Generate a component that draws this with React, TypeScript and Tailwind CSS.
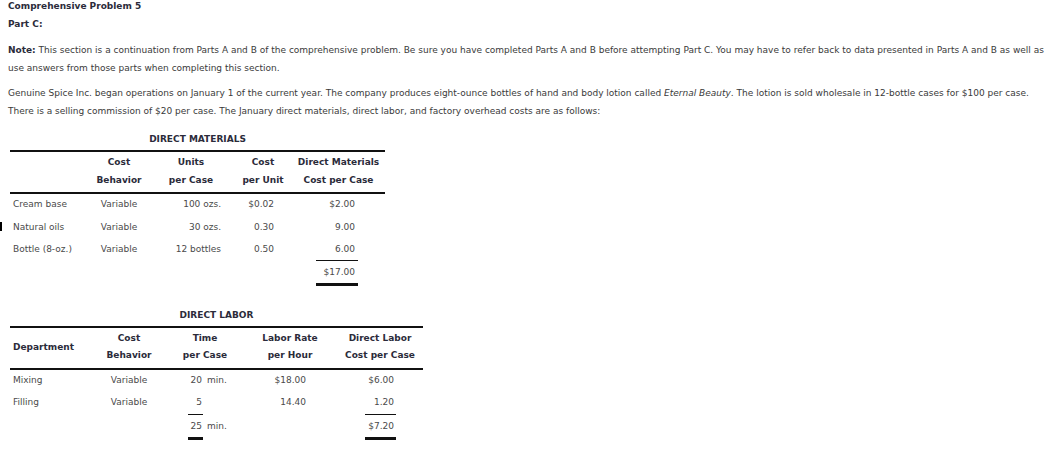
import React from 'react';

const font = { fontFamily: '"DejaVu Sans", Verdana, sans-serif' };

const materials = [
  { name: 'Cream base', units: '100 ozs.', unit: '$0.02', cost: '$2.00' },
  { name: 'Natural oils', units: '30 ozs.', unit: '0.30', cost: '9.00' },
  { name: 'Bottle (8-oz.)', units: '12 bottles', unit: '0.50', cost: '6.00' },
];

const labor = [
  { dept: 'Mixing', time: '20', min: 'min.', rate: '$18.00', cost: '$6.00' },
  { dept: 'Filling', time: '5', min: '', rate: '14.40', cost: '1.20' },
];

const App = () => {
  return (
    <div className="relative w-[1056px] h-[456px] overflow-hidden bg-white text-[9px] text-[#3a3a3a]" style={font}>
      {/* little mark at the left edge */}
      <div className="absolute left-0 top-[222px] w-[2px] h-[9px] bg-black" />

      <div className="pl-[8px]">
        <h1 className="font-bold leading-[12px] text-[#2b2b3a]">Comprehensive Problem 5</h1>
        <h2 className="mt-[6px] font-bold leading-[12px] text-[#2b2b3a]">Part C:</h2>

        <p className="mt-[11px] leading-[18px]">
          <span className="block whitespace-nowrap">
            <b className="text-[#2b2b3a]">Note:</b> This section is a continuation from Parts A and B of the comprehensive problem. Be sure you have completed Parts A and B before attempting Part C. You may have to refer back to data presented in Parts A and B as well as
          </span>
          <span className="block whitespace-nowrap">use answers from those parts when completing this section.</span>
        </p>

        <p className="mt-[7px] leading-[18px]">
          <span className="block whitespace-nowrap">
            Genuine Spice Inc. began operations on January 1 of the current year. The company produces eight-ounce bottles of hand and body lotion called <i>Eternal Beauty</i>. The lotion is sold wholesale in 12-bottle cases for $100 per case.
          </span>
          <span className="block whitespace-nowrap">There is a selling commission of $20 per case. The January direct materials, direct labor, and factory overhead costs are as follows:</span>
        </p>
      </div>

      {/* DIRECT MATERIALS */}
      <div className="ml-[10px] w-[375px] mt-[10px]">
        <div className="text-center font-bold leading-[18px] text-[#2b2b3a]">DIRECT MATERIALS</div>
        <table className="mt-[2px] w-[375px] table-fixed border-collapse">
          <colgroup>
            <col className="w-[80px]" />
            <col className="w-[58px]" />
            <col className="w-[86px]" />
            <col className="w-[58px]" />
            <col className="w-[93px]" />
          </colgroup>
          <thead>
            <tr className="border-t-2 border-b-2 border-[#111]">
              <th />
              <th className="pt-[1px] pb-[3px] font-bold leading-[18px] text-center text-[#2b2b3a]">Cost<br />Behavior</th>
              <th className="pt-[1px] pb-[3px] font-bold leading-[18px] text-center text-[#2b2b3a]">Units<br />per Case</th>
              <th className="pt-[1px] pb-[3px] font-bold leading-[18px] text-center text-[#2b2b3a]">Cost<br />per Unit</th>
              <th className="pt-[1px] pb-[3px] font-bold leading-[18px] text-center text-[#2b2b3a] whitespace-nowrap">Direct Materials<br />Cost per Case</th>
            </tr>
          </thead>
          <tbody className="text-[#4a4a4a]">
            {materials.map((m, i) => (
              <tr key={m.name} className={i === 2 ? 'h-[21px]' : 'h-[23px]'}>
                <td className="pl-[3px] whitespace-nowrap">{m.name}</td>
                <td className="text-center">Variable</td>
                <td className="pr-[13px] text-right whitespace-nowrap">{m.units}</td>
                <td className="pr-[18px] text-right">{m.unit}</td>
                <td className="p-0">
                  <div className="ml-[24px] w-[42px] pr-[3px] text-right">{m.cost}</div>
                </td>
              </tr>
            ))}
            <tr>
              <td colSpan={4} />
              <td className="p-0">
                <div className="ml-[24px] w-[42px] pr-[3px] h-[26px] leading-[22px] text-right border-t border-b-[3px] border-[#111]">$17.00</div>
              </td>
            </tr>
          </tbody>
        </table>
      </div>

      {/* DIRECT LABOR */}
      <div className="ml-[10px] w-[413px] mt-[20px]">
        <div className="text-center font-bold leading-[18px] text-[#2b2b3a]">DIRECT LABOR</div>
        <table className="mt-[2px] w-[413px] table-fixed border-collapse">
          <colgroup>
            <col className="w-[81px]" />
            <col className="w-[76px]" />
            <col className="w-[76px]" />
            <col className="w-[94px]" />
            <col className="w-[86px]" />
          </colgroup>
          <thead>
            <tr className="border-t-2 border-b-2 border-[#111]">
              <th className="pl-[3px] text-left font-bold text-[#2b2b3a] align-middle">Department</th>
              <th className="pt-[2px] pb-[4px] font-bold leading-[17px] text-center text-[#2b2b3a]">Cost<br />Behavior</th>
              <th className="pt-[2px] pb-[4px] font-bold leading-[17px] text-center text-[#2b2b3a]">Time<br />per Case</th>
              <th className="pt-[2px] pb-[4px] font-bold leading-[17px] text-center text-[#2b2b3a]">Labor Rate<br />per Hour</th>
              <th className="pt-[2px] pb-[4px] font-bold leading-[17px] text-center text-[#2b2b3a] whitespace-nowrap">Direct Labor<br />Cost per Case</th>
            </tr>
          </thead>
          <tbody className="text-[#4a4a4a]">
            {labor.map((l, i) => (
              <tr key={l.dept} className={i === 1 ? 'h-[22px]' : 'h-[23px]'}>
                <td className="pl-[3px]">{l.dept}</td>
                <td className="text-center">Variable</td>
                <td className="p-0">
                  <div className="flex pl-[21px]">
                    <span className="w-[15px] pr-[1px] text-right">{l.time}</span>
                    <span className="ml-[4px]">{l.min}</span>
                  </div>
                </td>
                <td className="pr-[31px] text-right">{l.rate}</td>
                <td className="p-0">
                  <div className="ml-[28px] w-[31px] pr-[2px] text-right">{l.cost}</div>
                </td>
              </tr>
            ))}
            <tr>
              <td colSpan={2} />
              <td className="p-0">
                <div className="flex pl-[21px]">
                  <span className="w-[15px] h-[26px] leading-[22px] pr-[1px] text-right border-t border-b-[3px] border-[#111]">25</span>
                  <span className="ml-[4px] leading-[24px]">min.</span>
                </div>
              </td>
              <td />
              <td className="p-0">
                <div className="ml-[28px] w-[31px] pr-[2px] h-[26px] leading-[22px] text-right border-t border-b-[3px] border-[#111]">$7.20</div>
              </td>
            </tr>
          </tbody>
        </table>
      </div>
    </div>
  );
};

export default App;
